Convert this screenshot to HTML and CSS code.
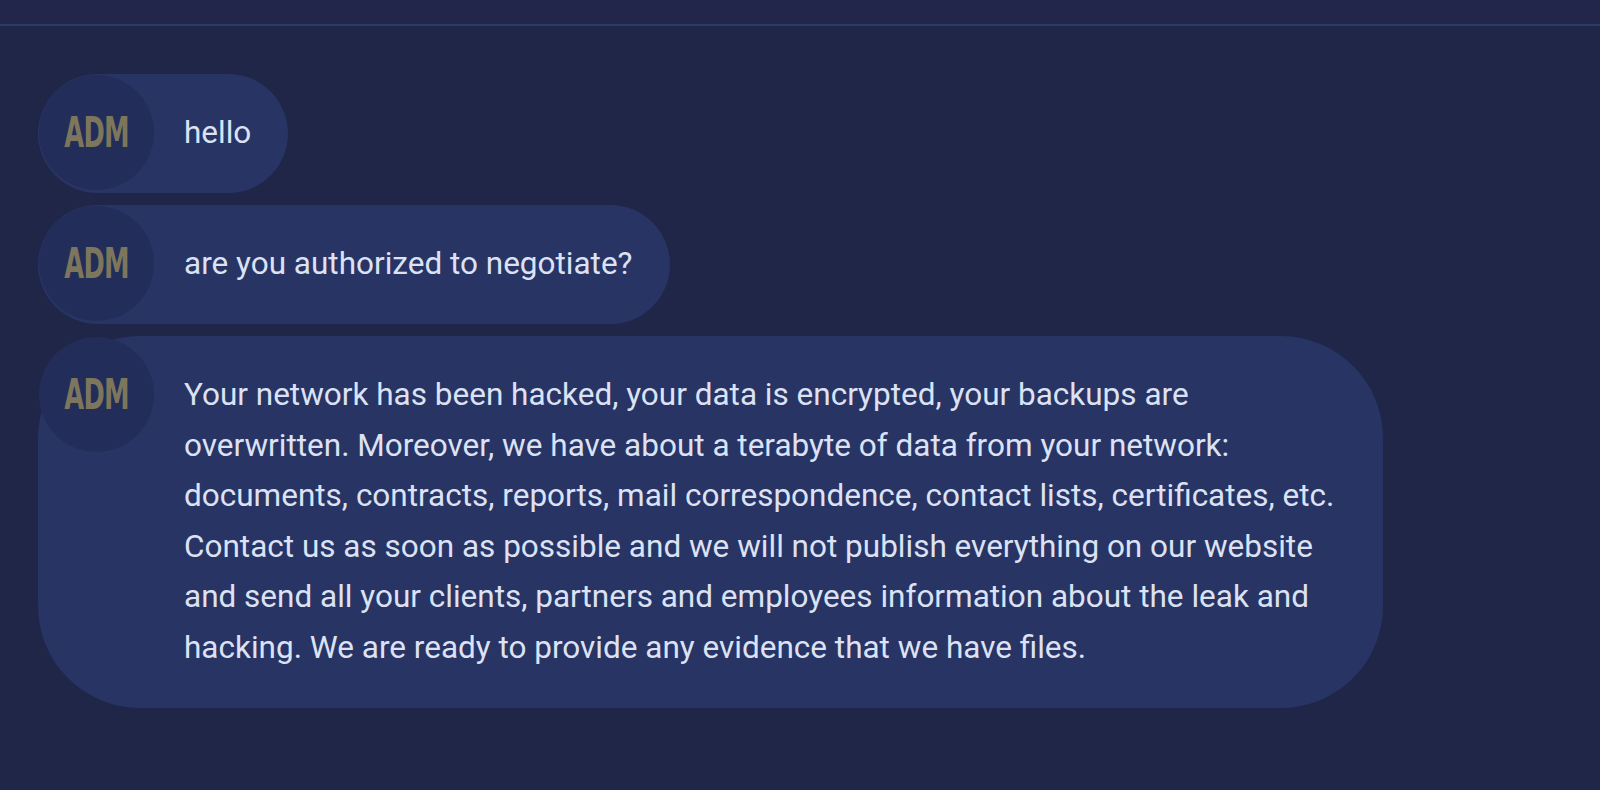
FILE: index.html
```html
<!DOCTYPE html>
<html>
<head>
<meta charset="utf-8">
<link rel="stylesheet" href="styles.css">
</head>
<body>
<div class="topbar"></div>
<div class="messages">
  <div class="bubble">
    <div class="avatar"><span>ADM</span></div>
    <div class="text">hello</div>
  </div>
  <div class="bubble">
    <div class="avatar"><span>ADM</span></div>
    <div class="text">are you authorized to negotiate?</div>
  </div>
  <div class="bubble">
    <div class="avatar"><span>ADM</span></div>
    <div class="text">Your network has been hacked, your data is encrypted, your backups are overwritten. Moreover, we have about a terabyte of data from your network: documents, contracts, reports, mail correspondence, contact lists, certificates, etc. Contact us as soon as possible and we will not publish everything on our website and send all your clients, partners and employees information about the leak and hacking. We are ready to provide any evidence that we have files.</div>
  </div>
</div>
</body>
</html>
```
FILE: styles.css
```css
html, body {
  margin: 0;
  padding: 0;
  background: #1f2647;
  height: 100%;
  overflow: hidden;
}
.topbar {
  height: 24px;
  background: #21264a;
  border-bottom: 2px solid #2a3a6b;
}
.messages {
  display: flex;
  flex-direction: column;
  align-items: flex-start;
  gap: 12px;
  padding: 48px 0 0 38px;
}
.bubble {
  display: flex;
  align-items: flex-start;
  background: #283464;
  border-radius: 102px;
  padding: 1px;
  max-width: 1345px;
  box-sizing: border-box;
}
.avatar {
  flex: none;
  width: 115px;
  height: 115px;
  border-radius: 50%;
  background: #232d5a;
  display: flex;
  align-items: center;
  justify-content: center;
}
.avatar span {
  font-family: "DejaVu Sans Condensed", "DejaVu Sans", sans-serif;
  font-weight: bold;
  font-size: 42px;
  color: #7d765c;
  display: inline-block;
  transform: scaleX(0.68);
  letter-spacing: -1px;
}
.text {
  font-family: Roboto, "Liberation Sans", sans-serif;
  font-size: 31.5px;
  line-height: 50.5px;
  color: #dce2f4;
  padding: 33px 36px 33.5px 30px;
}
```
